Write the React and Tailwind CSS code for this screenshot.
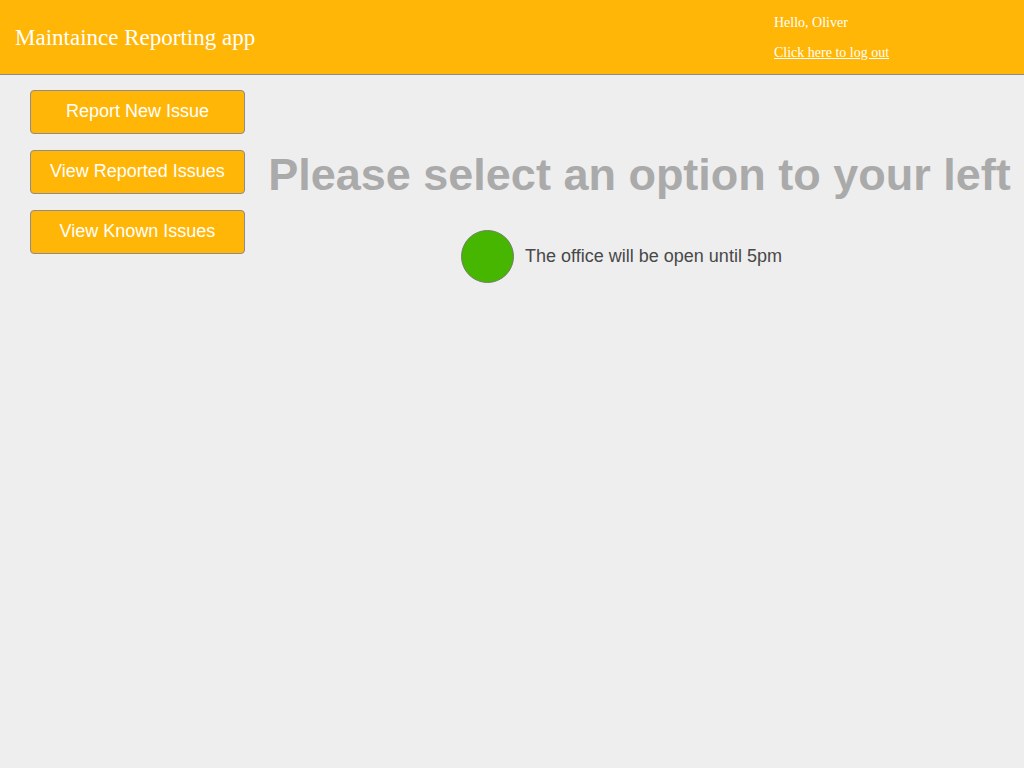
export default function App() {
    const options = ["Report New Issue", "View Reported Issues", "View Known Issues"];

    return (
        <div className="min-h-screen w-full bg-[#eeeeee]">
            <header className="flex h-[75px] items-center justify-between border-b border-[#8a8a8a] bg-[#ffb607]">
                <h1 className="pl-[15px] pt-[3px] text-[23px] text-white font-['Liberation_Serif',serif]">
                    Maintaince Reporting app
                </h1>
                <div className="flex w-[250px] flex-col gap-[14px] pt-[1px] text-[14px] leading-[16px] text-white font-['Liberation_Serif',serif]">
                    <span>Hello, Oliver</span>
                    <a href="#" className="underline">Click here to log out</a>
                </div>
            </header>
            <div className="flex">
                <nav className="flex w-[255px] shrink-0 flex-col gap-4 pl-[30px] pt-[15px]">
                    {options.map((label) => (
                        <button
                            key={label}
                            className="h-[44px] w-[215px] rounded-[4px] border border-[#8c8c8c] bg-[#ffb607] pb-[2px] text-[18px] text-white font-['Liberation_Sans',sans-serif]"
                        >
                            {label}
                        </button>
                    ))}
                </nav>
                <main className="flex flex-1 flex-col items-center pt-[74px]">
                    <h2 className="whitespace-nowrap text-[45px] font-bold leading-[52px] text-[#aaaaaa] font-['Liberation_Sans',sans-serif]">
                        Please select an option to your left
                    </h2>
                    <div className="mt-[29px] flex items-center gap-[11px] pr-[36px]">
                        <div className="h-[53px] w-[53px] rounded-full border border-[#6f7f66] bg-[#46b600]" />
                        <span className="text-[18px] text-[#484848] font-['Liberation_Sans',sans-serif]">
                            The office will be open until 5pm
                        </span>
                    </div>
                </main>
            </div>
        </div>
    );
}
